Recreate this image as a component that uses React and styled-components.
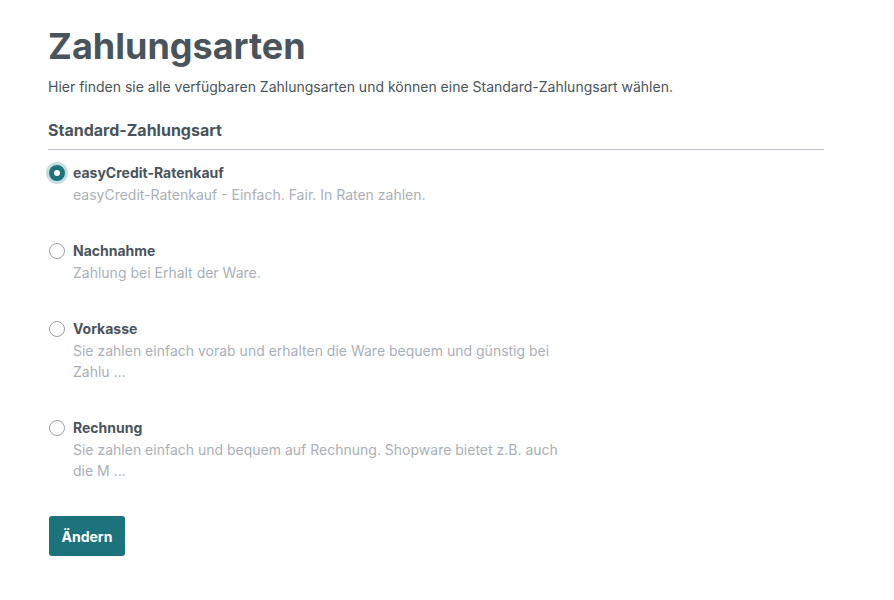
import React, { useState } from "react";
import styled, { createGlobalStyle } from "styled-components";

const GlobalStyle = createGlobalStyle`
  body {
    margin: 0;
    background: #fff;
    font-family: Inter, "Noto Sans", sans-serif;
    color: #4a545b;
  }
`;

const Page = styled.div`
  padding: 22px 70px 40px 48px;
`;

const Title = styled.h1`
  margin: 0;
  font-size: 36px;
  font-weight: 700;
  line-height: 48px;
  color: #4a545b;
`;

const Intro = styled.p`
  margin: 6px 0 0;
  font-size: 14px;
  line-height: 21px;
`;

const SectionTitle = styled.h2`
  margin: 21px 0 0;
  font-size: 16px;
  font-weight: 700;
  line-height: 24px;
  padding-bottom: 7px;
  border-bottom: 1px solid #bcc1c7;
`;

const List = styled.div`
  display: flex;
  flex-direction: column;
  gap: 36px;
  margin-top: 13px;
`;

const Option = styled.label`
  display: flex;
  align-items: flex-start;
  gap: 8px;
  cursor: pointer;
`;

const Radio = styled.span`
  flex: none;
  box-sizing: border-box;
  width: 16px;
  height: 16px;
  margin: 2px 0 0 1px;
  border-radius: 50%;
  border: ${p => (p.$checked ? "5px solid #1d737b" : "1px solid #9aa0a6")};
  background: #fff;
  box-shadow: ${p => (p.$checked ? "0 0 0 3px rgba(29,115,123,0.25)" : "none")};
`;

const Text = styled.div`
  display: flex;
  flex-direction: column;
  max-width: 490px;
`;

const Name = styled.span`
  font-size: 14px;
  font-weight: 700;
  line-height: 20px;
  color: #4a545b;
`;

const Desc = styled.span`
  font-size: 14px;
  line-height: 21px;
  margin-top: 1px;
  color: #aab0b6;
`;

const Button = styled.button`
  margin: 35px 0 0 1px;
  height: 40px;
  padding: 0 12.5px;
  border: none;
  border-radius: 3px;
  background: #1d737b;
  color: #fff;
  font-family: Inter, "Noto Sans", sans-serif;
  font-size: 14px;
  font-weight: 700;
  cursor: pointer;
`;

const methods = [
  { name: "easyCredit-Ratenkauf", desc: "easyCredit-Ratenkauf - Einfach. Fair. In Raten zahlen." },
  { name: "Nachnahme", desc: "Zahlung bei Erhalt der Ware." },
  { name: "Vorkasse", desc: "Sie zahlen einfach vorab und erhalten die Ware bequem und günstig bei Zahlu ..." },
  { name: "Rechnung", desc: "Sie zahlen einfach und bequem auf Rechnung. Shopware bietet z.B. auch die M ..." }
];

export default function App() {
  const [selected, setSelected] = useState(0);
  return (
    <Page>
      <GlobalStyle />
      <Title>Zahlungsarten</Title>
      <Intro>
        Hier finden sie alle verfügbaren Zahlungsarten und können eine Standard-Zahlungsart wählen.
      </Intro>
      <SectionTitle>Standard-Zahlungsart</SectionTitle>
      <List>
        {methods.map((m, i) => (
          <Option key={m.name} onClick={() => setSelected(i)}>
            <Radio $checked={selected === i} />
            <Text>
              <Name>{m.name}</Name>
              <Desc>{m.desc}</Desc>
            </Text>
          </Option>
        ))}
      </List>
      <Button>Ändern</Button>
    </Page>
  );
}
